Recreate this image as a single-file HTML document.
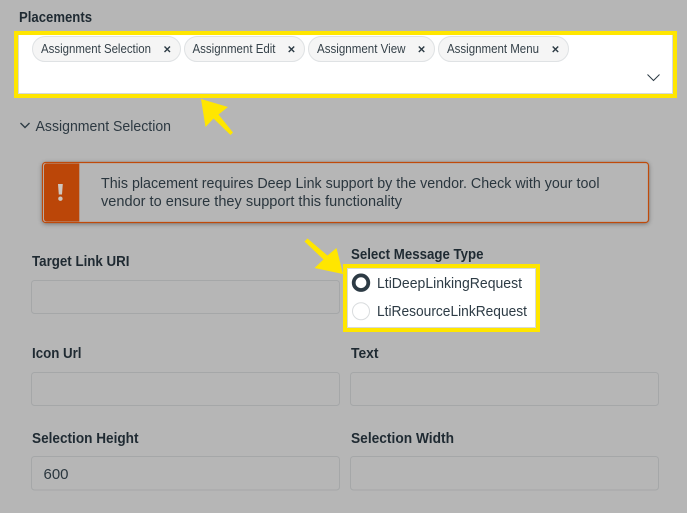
<!DOCTYPE html>
<html lang="en"><head><meta charset="utf-8"><title>Placements</title>
<style>
html,body{margin:0;padding:0;background:#b6b6b6;width:687px;height:513px;overflow:hidden}
svg{display:block}
text{font-family:"Liberation Sans",sans-serif;fill:#2a363e}
.b{font-weight:700;font-size:14.5px;fill:#1f2a32}
.c{font-size:12.5px;fill:#36424a}
.m{font-size:15px}
.r{font-size:15px;fill:#2d3b45}
.i{fill:none;stroke:#a5a7a8;stroke-width:1}
.x{stroke:#2d3b45;stroke-width:1.4;fill:none}
.ch{fill:#f5f5f5;stroke:#dfe2e4;stroke-width:1}
</style></head><body>
<svg width="687" height="513" viewBox="0 0 687 513" xmlns="http://www.w3.org/2000/svg">
<rect width="687" height="513" fill="#b6b6b6"/>
<text class="b" x="19" y="22" textLength="73" lengthAdjust="spacingAndGlyphs">Placements</text>

<rect x="16" y="33" width="659" height="63" fill="#fff" stroke="#ffe600" stroke-width="4"/>
<path d="M18.500 35v58.500H672.500V35" fill="none" stroke="#d5d9dc" stroke-width="1"/>

<rect class="ch" x="32.500" y="36.500" width="148" height="25" rx="12.500"/>
<text class="c" x="41" y="53" textLength="110" lengthAdjust="spacingAndGlyphs">Assignment Selection</text>
<path class="x" d="M164.500 46.500l5.500 5.500M170 46.500l-5.500 5.500"/>
<rect class="ch" x="184.500" y="36.500" width="120" height="25" rx="12.500"/>
<text class="c" x="192.500" y="53" textLength="83" lengthAdjust="spacingAndGlyphs">Assignment Edit</text>
<path class="x" d="M288.700 46.500l5.500 5.500M294.200 46.500l-5.500 5.500"/>
<rect class="ch" x="308.500" y="36.500" width="126" height="25" rx="12.500"/>
<text class="c" x="317" y="53" textLength="88.500" lengthAdjust="spacingAndGlyphs">Assignment View</text>
<path class="x" d="M418.800 46.500l5.500 5.500M424.300 46.500l-5.500 5.500"/>
<rect class="ch" x="438.500" y="36.500" width="130" height="25" rx="12.500"/>
<text class="c" x="447" y="53" textLength="92" lengthAdjust="spacingAndGlyphs">Assignment Menu</text>
<path class="x" d="M552.700 46.500l5.500 5.500M558.200 46.500l-5.500 5.500"/>
<path d="M647.500 74.500l6 6 6-6" fill="none" stroke="#2d3b45" stroke-width="1"/>

<polygon points="201,99 228,107 218.500,114.500 233,132.500 230.500,135 213.500,118.500 205.500,127" fill="#ffe600"/>

<path d="M20.500 123l4.500 4.500 4.500-4.500" fill="none" stroke="#2d3b45" stroke-width="1.400"/>
<text class="m" x="35.500" y="131" textLength="135.500" lengthAdjust="spacingAndGlyphs" style="fill:#2d3942">Assignment Selection</text>

<rect x="42.500" y="162.500" width="606" height="60" rx="3" fill="#b6b6b6" stroke="#bf4a0a" stroke-width="1.200" style="filter:drop-shadow(0 1px 2px rgba(0,0,0,.35))"/>
<path d="M44 166a2.500 2.500 0 0 1 2.500-2.500H79.300V221.500H46.500a2.500 2.500 0 0 1-2.500-2.500Z" fill="#bb4608"/>
<path d="M58 184h4.800l-.8 10.500h-3.200Z" fill="#cfc6bf"/>
<circle cx="60.400" cy="198.700" r="2.200" fill="#cfc6bf"/>
<text class="m" x="101" y="188" textLength="498.500" lengthAdjust="spacingAndGlyphs">This placement requires Deep Link support by the vendor. Check with your tool</text>
<text class="m" x="101" y="206" textLength="301" lengthAdjust="spacingAndGlyphs">vendor to ensure they support this functionality</text>

<text class="b" x="32" y="266" textLength="97.500" lengthAdjust="spacingAndGlyphs">Target Link URI</text>
<rect class="i" x="31.500" y="280.500" width="308" height="33" rx="3"/>

<polygon points="343,274 314.500,268 323.500,259.500 304.500,241.500 307.500,238.500 327.500,255.500 336.500,248" fill="#ffe600"/>

<text class="b" x="351" y="259" textLength="132.500" lengthAdjust="spacingAndGlyphs">Select Message Type</text>
<rect x="345" y="266" width="193" height="64" fill="#fff" stroke="#ffe600" stroke-width="4"/>
<rect x="347.500" y="268.500" width="188" height="59" fill="none" stroke="#d5d9dc" stroke-width="1"/>
<circle cx="361" cy="282.700" r="7.300" fill="#fff" stroke="#2d3b45" stroke-width="3.800"/>
<circle cx="361" cy="311.200" r="8.500" fill="#fff" stroke="#d9dcde" stroke-width="1"/>
<text class="r" x="377" y="288" textLength="145" lengthAdjust="spacingAndGlyphs">LtiDeepLinkingRequest</text>
<text class="r" x="377" y="316" textLength="150" lengthAdjust="spacingAndGlyphs">LtiResourceLinkRequest</text>

<text class="b" x="32" y="358" textLength="49.500" lengthAdjust="spacingAndGlyphs">Icon Url</text>
<text class="b" x="351" y="358" textLength="27.500" lengthAdjust="spacingAndGlyphs">Text</text>
<rect class="i" x="31.500" y="372.500" width="308" height="33" rx="3"/>
<rect class="i" x="350.500" y="372.500" width="308" height="33" rx="3"/>

<text class="b" x="32" y="443" textLength="106.500" lengthAdjust="spacingAndGlyphs">Selection Height</text>
<text class="b" x="351" y="443" textLength="103" lengthAdjust="spacingAndGlyphs">Selection Width</text>
<rect class="i" x="31.500" y="456.500" width="308" height="33.500" rx="3"/>
<rect class="i" x="350.500" y="456.500" width="308" height="33.500" rx="3"/>
<text class="m" x="43.500" y="479" textLength="25" lengthAdjust="spacingAndGlyphs">600</text>
</svg>
</body></html>
